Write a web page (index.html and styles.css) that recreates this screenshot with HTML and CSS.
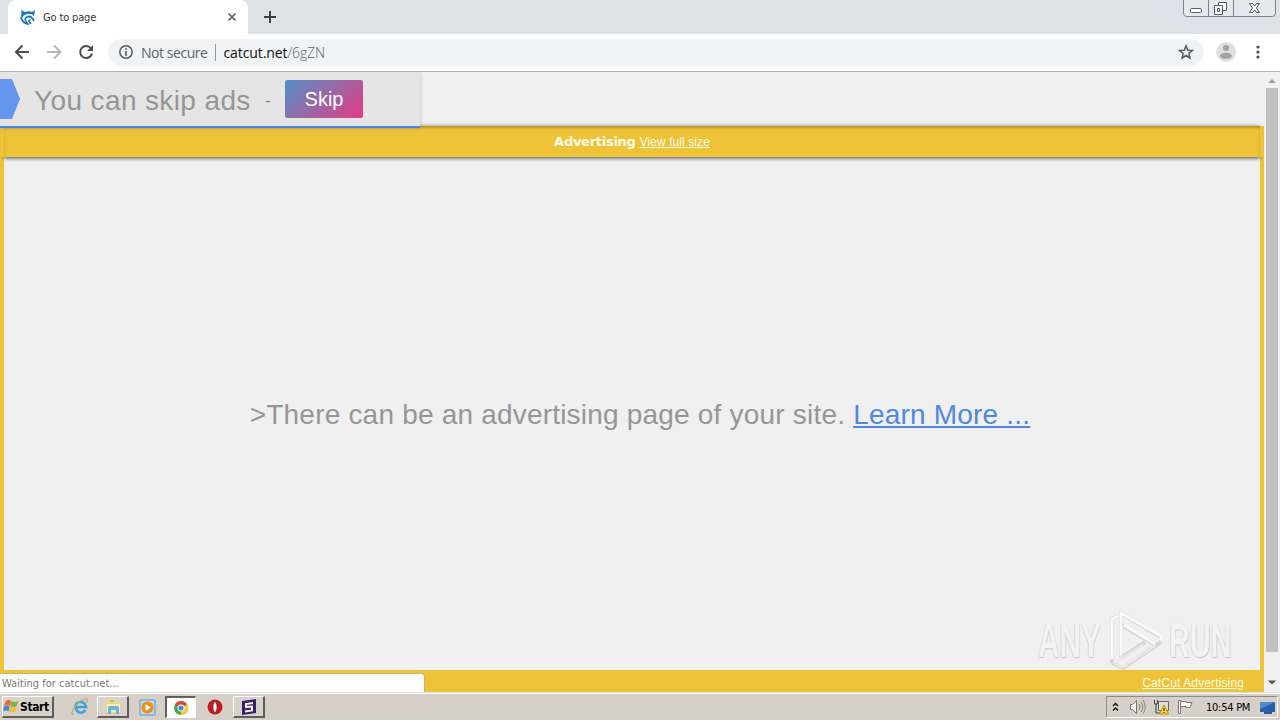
FILE: index.html
```html
<!DOCTYPE html>
<html lang="en">
<head>
<meta charset="utf-8">
<title>Go to page</title>
<link rel="stylesheet" href="styles.css">
</head>
<body>
<div class="screen">
  <header class="tabstrip">
    <div class="tab">
      <svg class="favicon" width="16" height="17" viewBox="0 0 16 17" fill="none" stroke="#1878bf"><path d="M1 1 5 3Q9 1.500 12 3L15 1 14 7Q11 4 7 5T2 9Q0 7 1.500 5z" fill="#1878bf" stroke="none"/><path d="M1 8Q2 14 9 15.500M8 15Q3 10 7 8T14 12M11 15Q7 11 10.500 11" stroke-width="1.700"/></svg>
      <span class="tab-title">Go to page</span>
      <svg class="tab-close" width="10" height="10" viewBox="0 0 10 10"><path d="m1.500 1.500 7 7m0-7-7 7" stroke="#55585c" stroke-width="1.600"/></svg>
    </div>
    <svg class="new-tab" width="12" height="12" viewBox="0 0 12 12"><path d="M6 0v12M0 6h12" stroke="#3c4043" stroke-width="2"/></svg>
    <svg class="window-buttons" width="94" height="18" viewBox="0 0 94 18"><path d="M.5 0v13q0 3.500 3 3.500h86q3 0 3-3.500V0M25.500 0v16M50.500 0v16" fill="#e4e7ec" stroke="#7f838b"/><rect x="7.500" y="8.500" width="11" height="4" rx="1" fill="#fff" stroke="#555a63"/><path d="M35.500 2.500h8v8h-8z" fill="#fff" stroke="#555a63"/><path d="M31.500 5.500h8v9h-8z" fill="#fff" stroke="#555a63"/><path d="M34.500 8.500h2v3h-2z" fill="#fff" stroke="#555a63"/><path d="M66.500 3.500h3l2 2.500 2-2.500h3l-3 4.500 3 4.500h-3l-2-2.500-2 2.500h-3l3-4.500z" fill="#fff" stroke="#555a63"/></svg>
  </header>
  <nav class="toolbar">
    <svg class="nav-icons" width="72" height="20" viewBox="0 0 72 20" fill="none" stroke-width="2"><path d="M23 10H10.500M16.500 3.500 10 10l6.500 6.500" stroke="#4b4e52"/><path d="M41 10h13M48 3.500l6.500 6.500-6.500 6.500" stroke="#b4b6b9"/></svg>
    <svg class="reload" width="16" height="16" viewBox="0 0 16 16"><path d="M13 4.500A6 6 0 1 0 14 9.500" fill="none" stroke="#4b4e52" stroke-width="2"/><path d="M15 1v6H9z" fill="#4b4e52"/></svg>
    <div class="address">
      <svg width="14" height="14" viewBox="0 0 14 14"><circle cx="7" cy="7" r="6.200" fill="none" stroke="#5b5e62" stroke-width="1.500"/><path d="M7 3v1.700M7 6v5" stroke="#5b5e62" stroke-width="1.600"/></svg>
      <span class="security">Not secure</span>
      <span class="divider"></span>
      <span class="url"><span class="host">catcut.net</span>/6gZN</span>
      <svg class="star" width="16" height="16" viewBox="0 0 16 16"><path d="m8 1.800 1.700 4.400 4.700.3-3.600 3 1.200 4.600L8 11.500l-4 2.600 1.200-4.600-3.600-3 4.700-.3z" fill="none" stroke="#55585c" stroke-width="1.500"/></svg>
    </div>
    <svg class="avatar" width="20" height="20" viewBox="0 0 20 20"><circle cx="10" cy="10" r="10" fill="#dedfe1"/><circle cx="10" cy="6" r="3" fill="#a0a2a4"/><ellipse cx="10" cy="13.800" rx="6" ry="3" fill="#a0a2a4"/></svg>
    <svg class="menu" width="4" height="14" viewBox="0 0 4 14" fill="#4b4e52"><circle cx="2" cy="2" r="1.600"/><circle cx="2" cy="7" r="1.600"/><circle cx="2" cy="12" r="1.600"/></svg>
  </nav>
  <main class="viewport">
    <div class="page">
      <div class="top-row">
        <div class="skip-bar">
          <svg class="arrow" width="20" height="40" viewBox="0 0 20 40"><path d="M0 0h12l8 20-8 20H0z" fill="#6495ed"/></svg>
          <span class="skip-text">You can skip ads</span>
          <span class="dash">-</span>
          <span class="skip-button">Skip</span>
        </div>
      </div>
      <div class="ad-header"><b>Advertising</b><a>View full size</a></div>
      <div class="ad-frame"><p class="ad-text">&gt;There can be an advertising page of your site. <a>Learn More ...</a></p></div>
      <footer class="ad-footer"><a>CatCut Advertising</a></footer>
      <div class="status">Waiting for catcut.net...</div>
      <div class="watermark">
        <span class="mark-any">ANY</span>
        <svg width="58" height="62" viewBox="0 0 58 62" fill="none" stroke-linejoin="round"><path d="M4 54V10l6-3M4 54l11 5 38-26M13 49V4l40 24M13 16l35 20M13 49l24-16" stroke="#d6d6d6" stroke-width="4"/><path d="M4 50V10l6-3M13 46V4l40 23v4M16 16l31 19" stroke="#fafafa" stroke-width="3"/><path d="M5 54l10 4 33-22M13 46v4l22-14" stroke="#e9e9e9" stroke-width="2.500"/></svg>
        <span class="mark-run">RUN</span>
      </div>
    </div>
    <aside class="scrollbar">
      <svg width="16" height="16" viewBox="0 0 16 16"><path d="m4 11 4-4 4 4z" fill="#a3a3a3"/></svg>
      <div class="thumb"></div>
      <svg class="down" width="16" height="16" viewBox="0 0 16 16"><path d="m4 5.500 4 4 4-4z" fill="#505050"/></svg>
    </aside>
  </main>
  <footer class="taskbar">
    <div class="start"><svg width="17" height="16" viewBox="0 0 17 16"><path d="M3 2q3-2 5 0L7 7Q4 5 1 7z" fill="#ef662f"/><path d="M8.500 2q3 2 7 0l-2 5q-3 2-6 0z" fill="#79b441"/><path d="M1 7.500q3-2 5.500 0l-1 5q-3-2-5.500 0z" fill="#4487cd"/><path d="M7 7.500q3 2 6.500 0l-1 5q-3 2-6.500 0z" fill="#f4bf32"/></svg><span>Start</span></div>
    <div class="task ie"><svg width="18" height="18" viewBox="0 0 18 18"><path d="M14.500 12Q12 15.500 8.500 14.500T5 9h10Q14 4 9.500 4T4 9" fill="none" stroke="#39a1df" stroke-width="2.500"/><path d="M3 16Q-1 17 3 10T14 1q4-1 1 4" fill="none" stroke="#a9b96b" stroke-width="1.300"/></svg></div>
    <div class="task raised"><svg width="18" height="18" viewBox="0 0 18 18"><path d="M2 2h5l2 2h7v11H2z" fill="#efd77b"/><path d="M3 6h13v8H3z" fill="#fbefb7"/><path d="M4 16v-6q0-2 2-2h7q2 0 2 2v6h-3v-4H7v4z" fill="#67b6dc"/><path d="M6 3h4" stroke="#61a55c"/></svg></div>
    <div class="task media"><svg width="17" height="17" viewBox="0 0 17 17"><path d="M1 1h15v15H1z" fill="#b9dcf2" stroke="#529cd2"/><circle cx="8.500" cy="8.500" r="6" fill="#f28b18"/><path d="m6.500 5 5.500 3.500L6.500 12z" fill="#fff"/></svg></div>
    <div class="task active"><svg width="14" height="14" viewBox="0 0 14 14"><circle cx="7" cy="7" r="7" fill="#4aa452"/><path d="M7 7 .9 3.500A7 7 0 0 1 13.100 3.500z" fill="#dd4b3e"/><path d="M7 7 13.100 3.500A7 7 0 0 1 7 14z" fill="#f6cb3c"/><circle cx="7" cy="7" r="3.500" fill="#fff"/><circle cx="7" cy="7" r="2.600" fill="#458bd5"/></svg></div>
    <div class="task opera"><svg width="16" height="16" viewBox="0 0 16 16"><circle cx="8" cy="8" r="7.500" fill="#c41c22"/><ellipse cx="8" cy="8" rx="2.200" ry="5.500" fill="#fff" stroke="#871014"/></svg></div>
    <div class="task raised"><svg width="16" height="16" viewBox="0 0 16 16"><path d="m1 2 14-2v14L1 16z" fill="#38206d"/><path d="M12 4 5 5v3l6-.500v4L4 12.500" fill="none" stroke="#fff" stroke-width="2"/></svg></div>
    <div class="tray">
      <svg class="chevrons" width="7" height="10" viewBox="0 0 7 10"><path d="m1 4 2.500-2.500L6 4M1 8.500 3.500 6 6 8.500" fill="none" stroke="#111" stroke-width="1.400"/></svg>
      <svg class="speaker" width="17" height="16" viewBox="0 0 17 16"><path d="M1.500 5.500h2l4-4v13l-4-4h-2z" fill="#fff" stroke="#75716c"/><path d="M10 5q2 3 0 6M12 3q3.500 5 0 10M14 1q4.500 7 0 14" fill="none" stroke="#88847e"/></svg>
      <svg class="network" width="17" height="16" viewBox="0 0 17 16"><path d="M5.500 2.500h10v9h-10z" fill="#dedede" stroke="#6b6863"/><path d="M1.500 1v4h3V1M3 5v9h4" fill="none" stroke="#3f3e3c"/><path d="m11 6 4.500 9h-9z" fill="#ffd42f" stroke="#c39414"/><path d="M11 9v3m0 1v1" stroke="#222"/></svg>
      <svg class="flag" width="17" height="16" viewBox="0 0 17 16"><path d="M1.500 1.500h2v13h-2z" fill="#fff" stroke="#77736f"/><path d="M3.500 2.500h6v1h5.500l-2 5H9v-1H3.500z" fill="#fff" stroke="#797570"/></svg>
      <time>10:54 PM</time>
      <svg class="desktop" width="16" height="13" viewBox="0 0 16 13"><path d="M0 1h15v10H0z" fill="#2461ad"/><path d="M0 1h15L0 8z" fill="#518bd0"/><path d="M4 12h8" stroke="#345887" stroke-width="2"/></svg>
    </div>
  </footer>
</div>
</body>
</html>
```
FILE: styles.css
```css
* { box-sizing: border-box; }
body { margin: 0; font-family: "Liberation Sans", sans-serif; }
svg { display: block; flex: none; }
.screen { width: 1280px; height: 720px; display: flex; flex-direction: column; overflow: hidden; }
.tabstrip { height: 34px; flex: none; display: flex; background: #dee1e8; padding-left: 8px; }
.tab { width: 240px; display: flex; align-items: center; padding: 0 11px 0 12px; background: #fff; border-radius: 8px 8px 0 0; }
.tab-title { margin-left: 7px; font: 11px "DejaVu Sans Condensed", sans-serif; letter-spacing: -.15px; color: #333; }
.tab-close { margin-left: auto; }
.new-tab { margin: 11px 0 0 16px; }
.window-buttons { margin-left: auto; margin-right: 3px; }
.toolbar { height: 38px; flex: none; display: flex; align-items: center; background: #fff; border-bottom: 1px solid #b0b2b1; padding: 0 0 1px 6px; }
.address { width: 1096px; height: 27px; margin-left: 14px; padding: 0 10px 0 11px; border-radius: 14px; background: #f0f2f4; display: flex; align-items: center; font: 300 14px "Open Sans", sans-serif; color: #5f6368; }
.security { margin-left: 8px; font-weight: 400; letter-spacing: -.45px; }
.divider { width: 1px; height: 17px; background: #999; margin: 0 8px 0 7px; }
.url { letter-spacing: -.1px; }
.host { color: #111; font-weight: 400; letter-spacing: -.1px; }
.star { margin-left: auto; }
.avatar { margin-left: 12px; }
.menu { margin-left: 20px; }
.viewport { height: 620px; flex: none; display: flex; }
.page { width: 1264px; position: relative; display: flex; flex-direction: column; overflow: hidden; background: #f0f0f0; }
.top-row { height: 54px; flex: none; }
.skip-bar { position: relative; z-index: 2; width: 420px; height: 56px; display: flex; align-items: center; background: #e5e5e5; border-bottom: 2px solid #4c87e8; box-shadow: 1px 1px 3px #8885; }
.skip-text { width: 217px; margin: 3px 0 0 14px; font-size: 28px; letter-spacing: .38px; color: #969696; white-space: nowrap; }
.dash { margin: 4px 14px 0 14px; width: 6px; font-size: 17px; color: #888; }
.skip-button { width: 78px; height: 38px; border-radius: 2px; background: linear-gradient(135deg, #5291c7, #e43b83); color: #fff; font-size: 20px; line-height: 38px; text-align: center; }
.ad-header { height: 31px; flex: none; display: flex; justify-content: center; align-items: center; gap: 4px; margin: 0 4px; background: #eec338; box-shadow: -4px 0 #eec338, 4px 0 #eec338, 0 1px 4px #444, inset 0 2px 2px #b9952c; position: relative; color: #fffbe9; font-size: 12px; }
.ad-header b { font: bold 13px "DejaVu Sans", sans-serif; letter-spacing: -.27px; }
.ad-header a { letter-spacing: .08px; }
a { text-decoration: underline; }
.ad-frame { height: 513px; flex: none; border: solid #eec338; border-width: 0 4px; padding-left: 16px; display: flex; justify-content: center; align-items: center; }
.ad-text { margin: 3px 0 0; font-size: 28px; letter-spacing: .2px; color: #969696; white-space: nowrap; }
.ad-text a { color: #5087e5; }
.ad-footer { height: 22px; flex: none; background: #eec338; padding: 6px 20px 0 0; color: #fffbe9; text-align: right; font-size: 12px; letter-spacing: .13px; }
.status { position: absolute; left: 0; bottom: 0; width: 425px; height: 19px; padding-left: 2px; background: #fff; border: solid #c9b274; border-width: 1px 1px 0 0; border-radius: 0 4px 0 0; font: 11px/19px "DejaVu Sans Condensed", sans-serif; color: #777; }
.watermark { position: absolute; left: 1038px; top: 537px; display: flex; align-items: center; color: #f3f3f3; text-shadow: 1px 1px 1px #c8c8c8, -1px 0 1px #d3d3d3; font: bold 48px "Liberation Sans", sans-serif; }
.mark-any, .mark-run { width: 64px; transform-origin: left; transform: scaleX(.62); }
.mark-any { margin-right: 6px; }
.mark-run { margin-left: 3px; transform: scaleX(.6); }
.scrollbar { width: 16px; display: flex; flex-direction: column; background: #f1f1f1; }
.thumb { width: 12px; height: 564px; margin-left: 2px; background: #c1c1c1; }
.down { margin-top: auto; margin-bottom: 1px; }
.taskbar { height: 28px; flex: none; display: flex; align-items: center; background: #d6d0c9; border-top: 1px solid #ddd; box-shadow: inset 0 1px #fff; padding: 1px 2px 0; }
.start, .raised { background: #d8d2cb; border: 1px solid #fff; border-right: 2px solid #605d59; border-bottom: 2px solid #605d59; }
.start { width: 52px; height: 22px; display: flex; align-items: center; }
.start span { font: bold 12px "DejaVu Sans Condensed", sans-serif; letter-spacing: -.4px; }
.task { height: 22px; display: flex; align-items: center; justify-content: center; }
.ie { width: 20px; margin: 0 7px 0 16px; }
.raised { width: 32px; }
.media { width: 18px; margin: 0 9px; }
.active { width: 31px; background: #fff; border: 2px solid #615e59; border-right: 1px solid #fff; border-bottom: 1px solid #fff; }
.opera { width: 17px; margin: 0 10px; }
.tray { width: 172px; height: 22px; margin-left: auto; display: flex; align-items: center; border: 1px solid #918b84; border-right-color: #fff; border-bottom-color: #fff; padding-left: 5px; }
.speaker { margin-left: 10px; }
.network { margin-left: 7px; }
.flag { margin-left: 7px; }
time { margin-left: 12px; width: 46px; font: 11px "DejaVu Sans Condensed", sans-serif; letter-spacing: -.25px; white-space: nowrap; }
.desktop { margin-left: 8px; }
```
